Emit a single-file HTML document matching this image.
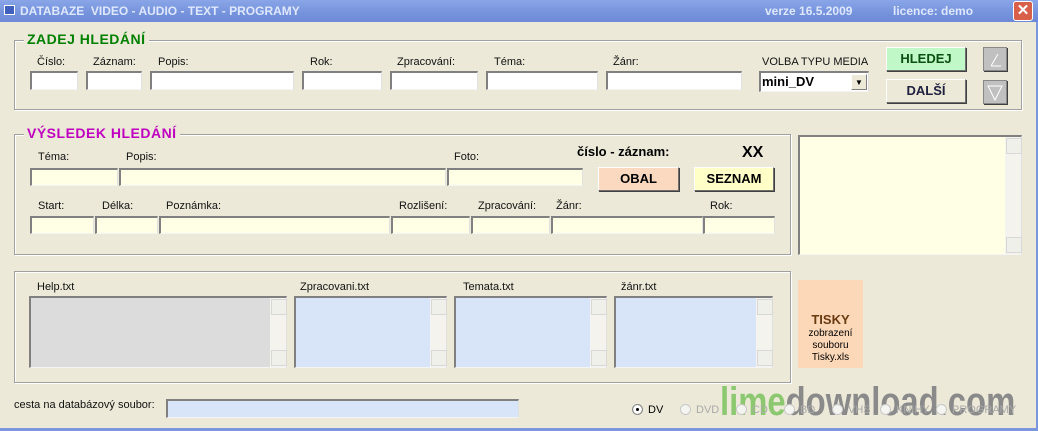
<!DOCTYPE html>
<html><head><meta charset="utf-8"><style>
*{margin:0;padding:0;box-sizing:border-box}
body{width:1038px;height:431px;overflow:hidden;background:#ece9d8;font-family:"Liberation Sans",sans-serif;font-size:11px;color:#000;position:relative}
.a{position:absolute}
.tb{left:0;top:0;width:1038px;height:22px;background:linear-gradient(#8aa6e8,#7592dc 60%,#6e8ad6);color:#dfe8ff;font-weight:bold;font-size:12px}
.fr{position:absolute;border:1px solid #a0a0a0;box-shadow:1px 1px 0 #fff inset,1px 1px 0 #fff}
.lg{position:absolute;background:#ece9d8;font-weight:bold;font-size:14px;padding:0 3px;letter-spacing:.5px}
.in{position:absolute;background:#fff;border-top:2px solid #808080;border-left:2px solid #808080;border-right:1px solid #e0e0e0;border-bottom:1px solid #f4f4f4}
.y{background:#ffffe6}
.bl{background:#d8e4f8}
.btn{position:absolute;border:1px solid #fff;border-right-color:#707070;border-bottom-color:#707070;box-shadow:1px 1px 0 #404040;font-weight:bold;font-size:13px;text-align:center;line-height:22px}
.l{position:absolute;font-size:11px;color:#111;white-space:nowrap}
.sb{position:absolute;right:0;top:0;bottom:0;width:16px;background:#f4f3ee}
.sb:before,.sb:after{content:"";position:absolute;left:1px;width:14px;height:14px;border:1px solid #d8d8d8;background:#f0f0ea}
.sb:before{top:1px}.sb:after{bottom:1px}
.rd{position:absolute;top:404px;font-size:11px;color:#aaa;white-space:nowrap}
.rd i{display:inline-block;width:11px;height:11px;border:1px solid #c8c8c8;border-radius:50%;vertical-align:-2px;margin-right:5px;background:#f4f4f0}
</style></head><body>
<div class="a tb"><span class="a" style="left:4px;top:5px;width:11px;height:10px;border:1px solid #fff;background:#4060c0"></span><span class="a" style="left:20px;top:4px">DATABAZE&nbsp; VIDEO - AUDIO - TEXT - PROGRAMY</span><span class="a" style="left:765px;top:4px">verze 16.5.2009</span><span class="a" style="left:893px;top:4px">licence: demo</span>
<span class="a" style="left:1013px;top:1px;width:20px;height:20px;background:#d8604a;border:1px solid #fff;border-radius:3px;color:#fff;text-align:center;line-height:18px;font-size:15px">✕</span></div>
<div class="a" style="left:1036px;top:22px;width:2px;height:409px;background:#7b96dc"></div>
<div class="a" style="left:0;top:428px;width:1038px;height:3px;background:#7b96dc"></div>

<div class="fr" style="left:14px;top:40px;width:1008px;height:70px"></div>
<div class="lg" style="left:24px;top:31px;color:#008000">ZADEJ HLEDÁNÍ</div>
<div class="l" style="left:37px;top:56px">Číslo:</div><div class="l" style="left:93px;top:56px">Záznam:</div><div class="l" style="left:158px;top:56px">Popis:</div><div class="l" style="left:310px;top:56px">Rok:</div><div class="l" style="left:397px;top:56px">Zpracování:</div><div class="l" style="left:494px;top:56px">Téma:</div><div class="l" style="left:613px;top:56px">Žánr:</div><div class="l" style="left:762px;top:56px">VOLBA TYPU MEDIA</div>
<div class="in" style="left:30px;top:71px;width:48px;height:19px"></div><div class="in" style="left:86px;top:71px;width:56px;height:19px"></div><div class="in" style="left:150px;top:71px;width:144px;height:19px"></div><div class="in" style="left:302px;top:71px;width:80px;height:19px"></div><div class="in" style="left:390px;top:71px;width:88px;height:19px"></div><div class="in" style="left:486px;top:71px;width:112px;height:19px"></div><div class="in" style="left:606px;top:71px;width:136px;height:19px"></div>
<div class="in" style="left:759px;top:71px;width:110px;height:21px;font-size:13px;font-weight:bold;padding-left:1px;line-height:17px">mini_DV<span class="a" style="right:1px;top:1px;width:16px;height:16px;background:#ece9d8;border:1px solid #fff;border-right-color:#808080;border-bottom-color:#808080;font-size:8px;text-align:center;line-height:15px">▼</span></div>
<div class="btn" style="left:886px;top:47px;width:80px;height:24px;background:#c0f8c8;color:#0a5010">HLEDEJ</div>
<div class="btn" style="left:886px;top:79px;width:80px;height:24px;background:#ece9d8;color:#202040">DALŠÍ</div>
<div class="btn" style="left:983px;top:47px;width:24px;height:24px;background:#c0c0c0;border-color:#888"><svg width="22" height="22"><path d="M7 18L14 6M7 18H17" stroke="#fff" fill="none"/></svg></div>
<div class="btn" style="left:983px;top:80px;width:24px;height:24px;background:#c0c0c0;border-color:#888"><svg width="22" height="22"><path d="M4 5H18L11 19Z" stroke="#fff" fill="none"/></svg></div>

<div class="fr" style="left:14px;top:134px;width:777px;height:121px"></div>
<div class="lg" style="left:24px;top:125px;color:#c000c0">VÝSLEDEK HLEDÁNÍ</div>
<div class="l" style="left:38px;top:151px">Téma:</div><div class="l" style="left:126px;top:151px">Popis:</div><div class="l" style="left:454px;top:151px">Foto:</div>
<div class="a" style="left:577px;top:144px;font-weight:bold;font-size:13px">číslo - záznam:</div><div class="a" style="left:742px;top:144px;font-weight:bold;font-size:16px">XX</div>
<div class="in y" style="left:30px;top:168px;width:88px;height:18px"></div><div class="in y" style="left:119px;top:168px;width:327px;height:18px"></div><div class="in y" style="left:447px;top:168px;width:136px;height:18px"></div>
<div class="btn" style="left:598px;top:167px;width:81px;height:24px;background:#fbd8c0">OBAL</div>
<div class="btn" style="left:694px;top:167px;width:80px;height:24px;background:#ffffc8">SEZNAM</div>
<div class="l" style="left:38px;top:200px">Start:</div><div class="l" style="left:102px;top:200px">Délka:</div><div class="l" style="left:166px;top:200px">Poznámka:</div><div class="l" style="left:399px;top:200px">Rozlišení:</div><div class="l" style="left:478px;top:200px">Zpracování:</div><div class="l" style="left:556px;top:200px">Žánr:</div><div class="l" style="left:710px;top:200px">Rok:</div>
<div class="in y" style="left:30px;top:216px;width:64px;height:18px"></div><div class="in y" style="left:95px;top:216px;width:63px;height:18px"></div><div class="in y" style="left:159px;top:216px;width:231px;height:18px"></div><div class="in y" style="left:391px;top:216px;width:79px;height:18px"></div><div class="in y" style="left:471px;top:216px;width:79px;height:18px"></div><div class="in y" style="left:551px;top:216px;width:152px;height:18px"></div><div class="in y" style="left:703px;top:216px;width:72px;height:18px"></div>
<div class="in y" style="left:798px;top:135px;width:224px;height:120px"><div class="sb"></div></div>

<div class="fr" style="left:14px;top:271px;width:777px;height:112px"></div>
<div class="l" style="left:37px;top:281px">Help.txt</div><div class="l" style="left:300px;top:281px">Zpracovani.txt</div><div class="l" style="left:463px;top:281px">Temata.txt</div><div class="l" style="left:621px;top:281px">žánr.txt</div>
<div class="in" style="left:29px;top:296px;width:258px;height:72px;background:#dcdcdc"><div class="sb"></div></div>
<div class="in bl" style="left:294px;top:296px;width:153px;height:72px"><div class="sb"></div></div>
<div class="in bl" style="left:454px;top:296px;width:153px;height:72px"><div class="sb"></div></div>
<div class="in bl" style="left:614px;top:296px;width:159px;height:72px"><div class="sb"></div></div>
<div class="a" style="left:798px;top:280px;width:65px;height:88px;background:#fcd8b8;text-align:center;font-size:10px;line-height:12px;padding-top:32px"><b style="font-size:13px;color:#6a3a10;line-height:15px">TISKY</b><br>zobrazení<br>souboru<br>Tisky.xls</div>
<div class="l" style="left:14px;top:399px">cesta na databázový soubor:</div>
<div class="in bl" style="left:166px;top:399px;width:353px;height:19px"></div>
<div class="a" style="left:720px;top:380px;font-size:40px;font-weight:bold;color:#8a8a8a;white-space:nowrap;transform:scaleX(0.82);transform-origin:0 0"><span style="color:#8cc870">lime</span>download.com</div>
<div class="rd" style="left:632px;color:#000"><i style="background:#fff;border-color:#888;box-shadow:inset 0 0 0 3px #fff,inset 0 0 0 6px #000"></i>DV</div>
<div class="rd" style="left:680px"><i></i>DVD</div><div class="rd" style="left:736px"><i></i>CD</div><div class="rd" style="left:784px"><i></i>BD</div><div class="rd" style="left:832px"><i></i>VHS</div><div class="rd" style="left:880px"><i></i>KNIHY</div><div class="rd" style="left:936px"><i></i>PROGRAMY</div>
</body></html>
